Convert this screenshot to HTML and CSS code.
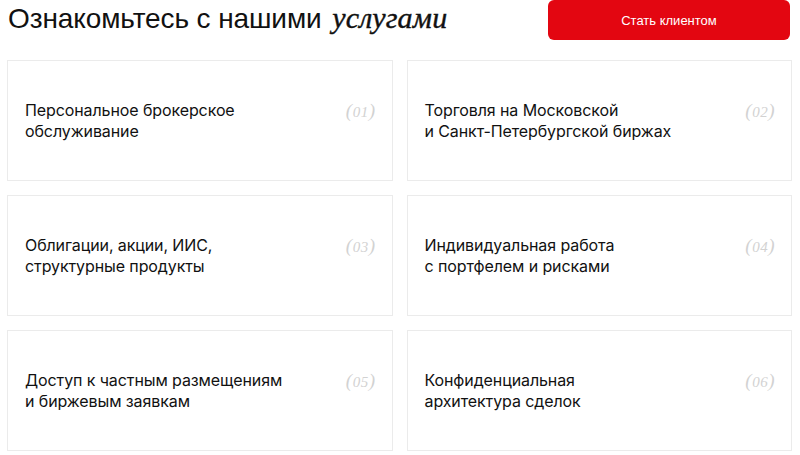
FILE: index.html
```html
<!DOCTYPE html>
<html lang="ru">
<head>
<meta charset="utf-8">
<link rel="stylesheet" href="styles.css">
</head>
<body>
<div class="page">
  <header class="head">
    <h1 class="title">Ознакомьтесь с нашими <em class="accent">услугами</em></h1>
    <a class="btn" href="#">Стать клиентом</a>
  </header>
  <div class="grid">
    <div class="card"><div class="row"><p class="text">Персональное брокерское<br>обслуживание</p><span class="num">(<span class="d">01</span>)</span></div></div>
    <div class="card"><div class="row"><p class="text">Торговля на Московской<br>и Санкт-Петербургской биржах</p><span class="num">(<span class="d">02</span>)</span></div></div>
    <div class="card"><div class="row"><p class="text">Облигации, акции, ИИС,<br>структурные продукты</p><span class="num">(<span class="d">03</span>)</span></div></div>
    <div class="card"><div class="row"><p class="text">Индивидуальная работа<br>с портфелем и рисками</p><span class="num">(<span class="d">04</span>)</span></div></div>
    <div class="card"><div class="row"><p class="text">Доступ к частным размещениям<br>и биржевым заявкам</p><span class="num">(<span class="d">05</span>)</span></div></div>
    <div class="card"><div class="row"><p class="text">Конфиденциальная<br>архитектура сделок</p><span class="num">(<span class="d">06</span>)</span></div></div>
  </div>
</div>
</body>
</html>
```
FILE: styles.css
```css
* { box-sizing: border-box; }
html, body { margin: 0; padding: 0; background: #fff; }
.page { padding: 0 8px 0 7px; font-family: Inter, "Liberation Sans", sans-serif; color: #111; }
.head { display: flex; justify-content: space-between; align-items: flex-start; height: 40px; }
.title { margin: 2px 0 0 1px; font-family: "Liberation Sans", Arial, sans-serif; font-weight: 400; font-size: 28px; line-height: 32px; letter-spacing: -0.1px; color: #111; }
.accent { font-family: "Liberation Serif", "DejaVu Serif", serif; font-style: italic; font-weight: 400; font-size: 30px; letter-spacing: 0.2px; margin-left: 3px; -webkit-text-stroke: 0.4px #111; }
.btn { width: 242px; height: 40px; margin-right: 2px; background: #e30611; color: #fff; border-radius: 6px; display: flex; align-items: center; justify-content: center; font-family: "Liberation Sans", Arial, sans-serif; font-size: 13px; text-decoration: none; }
.grid { margin-top: 20px; display: grid; grid-template-columns: 1fr 1fr; column-gap: 14px; row-gap: 14px; }
.card { height: 121px; border: 1.5px solid #ebebeb; display: flex; align-items: center; padding: 0 16px 0 17px; }
.row { flex: 1; display: flex; justify-content: space-between; align-items: flex-start; }
.text { margin: 0; font-size: 16px; line-height: 21px; color: #111; letter-spacing: -0.1px; }
.num { font-family: "Liberation Serif", "DejaVu Serif", serif; font-style: italic; font-size: 19px; line-height: 21px; color: #d2d2d2; letter-spacing: 0.5px; }
.d { font-size: 15px; }
```
